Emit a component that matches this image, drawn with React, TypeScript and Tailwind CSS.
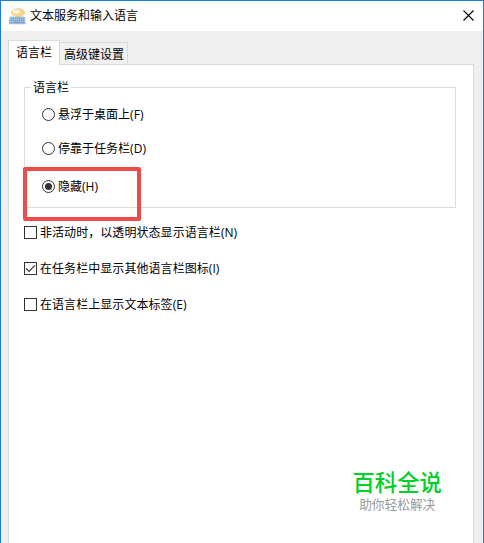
import React from 'react';

const RADIOS = [
  { label: '悬浮于桌面上(F)', checked: false, offset: 'mt-[19px]' },
  { label: '停靠于任务栏(D)', checked: false, offset: 'mt-[18px]' },
  { label: '隐藏(H)', checked: true, offset: 'mt-[22px]' },
];

const CHECKS = [
  { label: '非活动时，以透明状态显示语言栏(N)', checked: false },
  { label: '在任务栏中显示其他语言栏图标(I)', checked: true },
  { label: '在语言栏上显示文本标签(E)', checked: false },
];

const KeyboardIcon: React.FC = () => (
  <svg width="17" height="17" viewBox="0 0 17 17" className="shrink-0">
    <path d="M1 9h14.5l.8 6.8H.3z" fill="#a9c6e6" stroke="#86a9d0" strokeWidth="0.7" />
    <path d="M2 10.8h13M1.6 12.6h13.8" stroke="#5f8cc0" strokeWidth="0.9" strokeDasharray="1.3 0.7" />
    <path d="M1.5 14.4h2M4.5 14.4h7M12.6 14.4h2.4" stroke="#5f8cc0" strokeWidth="0.9" />
    <path d="M7.5 7.5l3.2 2.6.3-3z" fill="#e3ad5a" />
    <ellipse cx="9" cy="4.6" rx="6.6" ry="3.9" fill="#f7d78f" stroke="#e6bd70" strokeWidth="0.6" />
    <ellipse cx="7.2" cy="3.6" rx="3.8" ry="2" fill="#fff4d2" />
  </svg>
);

const Radio: React.FC<{ label: string; checked: boolean; offset: string }> = ({ label, checked, offset }) => (
  <div className={`flex h-4 items-start ${offset}`}>
    <span className="mt-px flex h-[13px] w-[13px] shrink-0 items-center justify-center rounded-full border border-[#333] bg-white">
      {checked && <span className="h-[7px] w-[7px] rounded-full bg-[#333]" />}
    </span>
    <span className="ml-[3px] tracking-[0.02px]">{label}</span>
  </div>
);

const Check: React.FC<{ label: string; checked: boolean }> = ({ label, checked }) => (
  <div className="flex h-4 items-start">
    <span className="mt-px h-[13px] w-[13px] shrink-0 border border-[#333] bg-white">
      {checked && (
        <svg width="11" height="11" viewBox="0 0 11 11" fill="none" stroke="#333" strokeWidth="1.2">
          <path d="M1 5.3l3 3L10 2.3" />
        </svg>
      )}
    </span>
    <span className="ml-[3px] tracking-[0.06px]">{label}</span>
  </div>
);

export default function App() {
  return (
    <div className="flex h-[543px] w-[484px] flex-col overflow-hidden border border-b-0 border-[#1a80d5] bg-[#efefef] font-['Open_Sans','Noto_Sans_CJK_SC',sans-serif] text-[12px] leading-4 whitespace-nowrap text-black">
      <div className="flex h-[30px] shrink-0 items-center bg-white pl-2">
        <KeyboardIcon />
        <span className="ml-1">文本服务和输入语言</span>
        <svg width="11" height="11" viewBox="0 0 11 11" className="mr-[9px] mb-px ml-auto" stroke="#000" strokeWidth="1.1">
          <path d="M0.5 0.5l10 10M10.5 0.5l-10 10" />
        </svg>
      </div>

      <div className="mt-[9px] flex h-6 shrink-0 items-end pl-[7px]">
        <div className="z-10 -mb-px flex h-[25px] w-[52px] items-center justify-center border border-b-0 border-[#d9d9d9] bg-white">
          语言栏
        </div>
        <div className="-ml-px flex h-[22px] w-[69px] items-center justify-center border border-b-0 border-[#d9d9d9] bg-[#f0f0f0] pt-[3px] pl-px">
          高级键设置
        </div>
      </div>

      <div className="mr-[9px] ml-[7px] flex flex-1 flex-col border border-b-0 border-[#d9d9d9] bg-white pr-[17px] pl-[15px]">
        <div className="relative mt-[22px] h-[121px] border border-[#dcdcdc] pl-[17px]">
          <span className="absolute -top-2 left-[6px] bg-white px-[2px]">语言栏</span>
          {RADIOS.map((item) => (
            <Radio key={item.label} {...item} />
          ))}
          {/* highlight around the hidden option */}
          <div className="absolute top-[79px] -left-[2px] h-[54px] w-[118px] rounded-[2px] border-4 border-[#ee4b4b]" />
        </div>

        <div className="mt-[17px] flex flex-col gap-5">
          {CHECKS.map((item) => (
            <Check key={item.label} {...item} />
          ))}
        </div>

        <div className="mt-auto mr-[14px] mb-[30px] flex flex-col items-center self-end">
          <span className="text-[22.4px] leading-[26px] font-medium text-[#00d02a]">百科全说</span>
          <span className="text-[12.7px] leading-[17px] text-[#999]">助你轻松解决</span>
        </div>
      </div>
    </div>
  );
}
